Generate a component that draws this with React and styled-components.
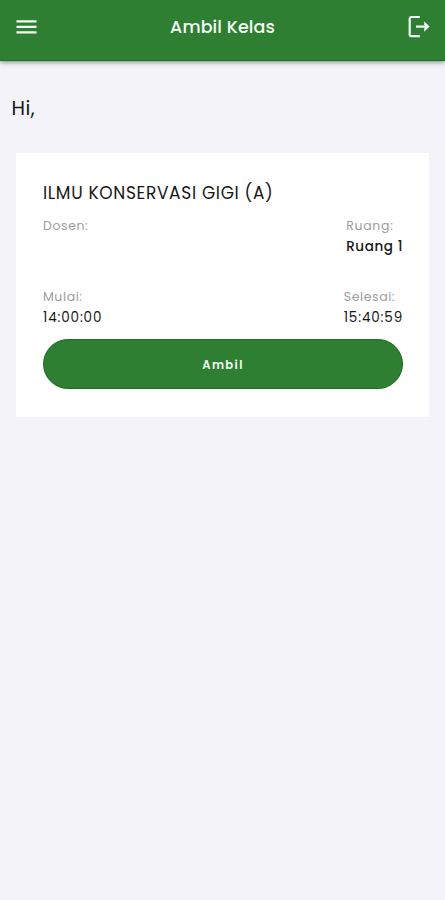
import React from 'react'
import styled, { createGlobalStyle } from 'styled-components'

const GlobalStyle = createGlobalStyle`
* {
  box-sizing: border-box;
}
body {
  margin: 0;
  background-color: #f3f3f9;
  color: #161616;
  font-family: Poppins, Inter, 'Liberation Sans', sans-serif;
}
`

const Screen = styled.div`
  min-height: 100vh;
  background-color: #f3f3f9;
`

const Header = styled.header`
  height: 61px;
  padding: 0 14px 7px 16px;
  display: flex;
  align-items: center;
  justify-content: space-between;
  background-color: #2f7f33;
  border-bottom: 1px solid #1b741f;
  color: #f4fbf4;
  box-shadow: 0 1px 5px rgba(0, 0, 0, 0.5);
`

const HeaderTitle = styled.h1`
  margin: 0;
  font-size: 17.5px;
  font-weight: 500;
  line-height: 26px;
  letter-spacing: 0.1px;
`

const IconButton = styled.button`
  display: flex;
  padding: 0;
  border: 0;
  background: none;
  color: inherit;
`

const Main = styled.main`
  padding: 33px 16px 0 16px;
`

const Greeting = styled.p`
  margin: 0 0 29px -4.5px;
  font-size: 19.5px;
  line-height: 30px;
  letter-spacing: 0.5px;
`

const Card = styled.section`
  height: 264px;
  padding: 27px 26px 0 27px;
  background-color: #fff;
`

const CourseName = styled.h2`
  margin: 0;
  font-size: 17px;
  font-weight: 400;
  line-height: 26px;
  letter-spacing: 0.66px;
  white-space: nowrap;
`

const Row = styled.div`
  height: ${props => props.$height}px;
  margin-top: ${props => props.$top || 0}px;
  display: flex;
  justify-content: space-between;
`

const Label = styled.div`
  color: #9c9c9c;
  font-size: 12.5px;
  line-height: 20px;
  letter-spacing: ${props => props.$spacing}px;
`

const Value = styled.div`
  font-size: 13.5px;
  font-weight: ${props => props.$weight};
  line-height: 21px;
  letter-spacing: ${props => props.$spacing}px;
`

const TakeButton = styled.button`
  width: 100%;
  height: 50px;
  padding: 2px 0 0;
  border: 1px solid #17741b;
  border-radius: 25px;
  background-color: #2f7f33;
  color: #f4fbf4;
  font-family: inherit;
  font-size: 11.5px;
  font-weight: 600;
  letter-spacing: 1.4px;
`

const MenuIcon = () => (
  <svg width="21" height="16" viewBox="0 0 21 16" stroke="currentColor" strokeWidth="2.2">
    <path d="M0.5 2.3h20M0.5 7.8h20M0.5 13.3h20" />
  </svg>
)

const LogoutIcon = () => (
  <svg width="23" height="23" viewBox="0 0 23 23" fill="none" stroke="currentColor" strokeWidth="2.2">
    <path d="M11.8 2H3.4a1.7 1.7 0 0 0-1.7 1.7v15.8A1.7 1.7 0 0 0 3.4 21.2h8.4" />
    <path d="M8 11.6h10" />
    <path d="M16.2 6.4l5.4 5.2-5.4 5.2v-3.6l1.6-1.6-1.6-1.6z" fill="currentColor" stroke="none" />
  </svg>
)

// etiqueta con su valor debajo
const Field = ({ label, value, labelSpacing = 0.6, valueSpacing = 0.85, weight = 400 }) => (
  <div>
    <Label $spacing={labelSpacing}>{label}</Label>
    {value && <Value $spacing={valueSpacing} $weight={weight}>{value}</Value>}
  </div>
)

const App = () => {
  return (
    <>
      <GlobalStyle />
      <Screen>
        <Header>
          <IconButton aria-label="Menu"><MenuIcon /></IconButton>
          <HeaderTitle>Ambil Kelas</HeaderTitle>
          <IconButton aria-label="Keluar"><LogoutIcon /></IconButton>
        </Header>
        <Main>
          <Greeting>Hi,</Greeting>
          <Card>
            <CourseName>ILMU KONSERVASI GIGI (A)</CourseName>
            <Row $top={10} $height={71}>
              <Field label="Dosen:" />
              <Field label="Ruang:" labelSpacing={0.7} value="Ruang 1" valueSpacing={0.6} weight={500} />
            </Row>
            <Row $height={52}>
              <Field label="Mulai:" value="14:00:00" />
              <Field label="Selesai:" value="15:40:59" />
            </Row>
            <TakeButton>Ambil</TakeButton>
          </Card>
        </Main>
      </Screen>
    </>
  )
}

export default App
